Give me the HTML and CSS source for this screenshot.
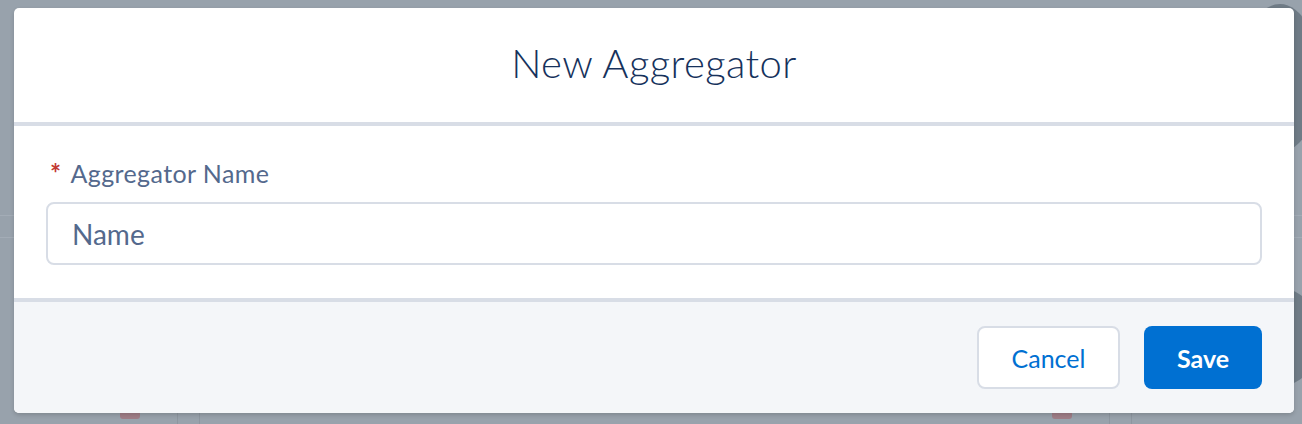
FILE: index.html
```html
<!DOCTYPE html>
<html lang="en">
<head>
    <meta charset="UTF-8">
    <meta name="viewport" content="width=device-width, initial-scale=1.0">
    <title>New Aggregator</title>
    <link rel="stylesheet" href="styles.css">
</head>
<body>

<div class="backdrop">
    <span class="bg-line line-a"></span>
    <span class="bg-line line-b"></span>
    <span class="bg-circle circle-top"></span>
    <span class="bg-circle circle-bottom"></span>
    <span class="bg-badge badge-left"></span>
    <span class="bg-badge badge-right"></span>
    <span class="bg-col col-1"></span>
    <span class="bg-col col-2"></span>
    <span class="bg-col col-3"></span>
    <span class="bg-col col-4"></span>
</div>

<div class="modal">
    <div class="modal-header">
        <h2>New Aggregator</h2>
    </div>
    <div class="modal-body">
        <label for="aggName"><abbr title="required">*</abbr>Aggregator Name</label>
        <input type="text" id="aggName" name="aggName" placeholder="Name">
    </div>
    <div class="modal-footer">
        <button type="button" class="btn btn-neutral">Cancel</button>
        <button type="submit" class="btn btn-brand">Save</button>
    </div>
</div>

</body>
</html>
```

FILE: styles.css
```css
body {
    font-family: Lato, "Open Sans", sans-serif;
    margin: 0;
    padding: 8px 8px 0 14px;
    background-color: #98a2ac;
    height: 424px;
    box-sizing: border-box;
    overflow: hidden;
    position: relative;
}

/* page behind the overlay */
.backdrop {
    position: absolute;
    top: 0;
    left: 0;
    width: 100%;
    height: 100%;
}
.bg-line {
    position: absolute;
    left: 0;
    width: 100%;
    height: 1px;
    background-color: #a3acb6;
}
.line-a { top: 215px; }
.line-b { top: 237px; }
.bg-circle {
    position: absolute;
    left: 1240px;
    width: 80px;
    border-radius: 50%;
    background-color: #6f7b86;
}
.circle-top {
    top: 4px;
    height: 148px;
}
.circle-bottom {
    top: 288px;
    height: 98px;
}
.bg-badge {
    position: absolute;
    top: 410px;
    width: 20px;
    height: 9px;
    border-radius: 3px;
    background-color: #a07e88;
}
.badge-left { left: 120px; }
.badge-right { left: 1052px; }
.bg-col {
    position: absolute;
    top: 410px;
    width: 1px;
    height: 14px;
    background-color: #8d96a0;
}
.col-1 { left: 177px; }
.col-2 { left: 199px; }
.col-3 { left: 1109px; }
.col-4 { left: 1131px; }

.modal {
    position: relative;
    width: 1280px;
    border-radius: 5px;
    overflow: hidden;
    background-color: #fff;
    box-shadow: 0 2px 4px rgba(0, 0, 0, 0.16);
}

.modal-header {
    height: 114px;
    border-bottom: 4px solid #d8dde6;
    display: flex;
    justify-content: center;
    align-items: center;
}
.modal-header h2 {
    margin: 0 0 4px 0;
    font-size: 40px;
    font-weight: 300;
    color: #16325c;
    letter-spacing: 0.4px;
}

.modal-body {
    height: 176px;
    padding: 31px 32px 0 32px;
    box-sizing: border-box;
    border-bottom: 4px solid #d8dde6;
}
.modal-body label {
    display: flex;
    align-items: baseline;
    font-size: 25px;
    letter-spacing: 0.4px;
    color: #54698d;
    height: 30px;
    margin-bottom: 15px;
}
.modal-body abbr {
    color: #c23934;
    text-decoration: none;
    font-size: 26px;
    font-weight: 700;
    margin: 0 9px 0 4px;
}
.modal-body input {
    width: 100%;
    height: 63px;
    box-sizing: border-box;
    border: 2px solid #d8dde6;
    border-radius: 8px;
    padding: 0 24px;
    font-family: inherit;
    font-size: 28px;
    color: #16325c;
    outline: none;
}
.modal-body input::placeholder {
    color: #54698d;
    opacity: 1;
}

.modal-footer {
    height: 111px;
    background-color: #f4f6f9;
    display: flex;
    justify-content: flex-end;
    align-items: center;
    gap: 24px;
    padding: 0 32px 0 0;
}
.btn {
    height: 63px;
    border-radius: 8px;
    font-family: inherit;
    font-size: 25px;
    cursor: pointer;
}
.btn-neutral {
    width: 143px;
    border: 2px solid #d8dde6;
    background-color: #fff;
    color: #0070d2;
}
.btn-brand {
    width: 118px;
    border: none;
    background-color: #0070d2;
    color: #fff;
    font-weight: 700;
}
```
